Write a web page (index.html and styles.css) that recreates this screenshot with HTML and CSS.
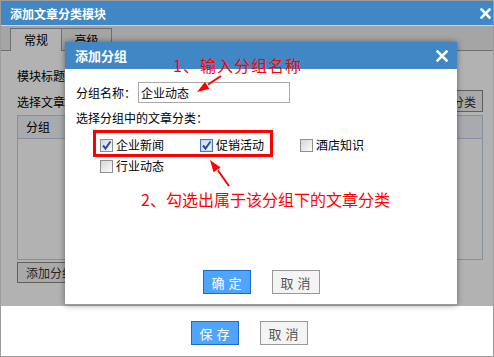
FILE: index.html
```html
<!DOCTYPE html>
<html lang="zh-CN">
<head>
    <meta charset="UTF-8">
    <title>添加文章分类模块</title>
    <link rel="stylesheet" href="styles.css">
</head>
<body>
    <div class="win">
        <div class="win-title">
            <span>添加文章分类模块</span>
            <svg class="x-icon" width="11" height="11" viewBox="0 0 11 11"><path d="M1.5 1.5 L9.5 9.5 M9.5 1.5 L1.5 9.5" stroke="#fff" stroke-width="2.6" stroke-linecap="square"/></svg>
        </div>
        <div class="win-body">
            <div class="tabs">
                <span class="tab active">常规</span>
                <span class="tab">高级</span>
            </div>
            <div class="panel">
                <div class="row"><span>模块标题</span><input class="txt" value=""></div>
                <div class="row between"><span>选择文章</span><button class="btn-sm">添加分类</button></div>
                <div class="grid">
                    <div class="grid-head"><span class="col1">分组</span></div>
                </div>
                <button class="btn-sm add">添加分组</button>
            </div>
            <div class="mask"></div>

            <div class="dlg">
                <div class="dlg-title">
                    <span>添加分组</span>
                    <svg class="x-icon" width="12" height="12" viewBox="0 0 12 12"><path d="M1.5 1.5 L10.5 10.5 M10.5 1.5 L1.5 10.5" stroke="#fff" stroke-width="2.6" stroke-linecap="square"/></svg>
                </div>
                <div class="dlg-body">
                    <div class="field"><span>分组名称：</span><input class="name" value="企业动态"></div>
                    <p class="hint">选择分组中的文章分类：</p>
                    <div class="cats">
                        <label class="cat"><span class="cb checked"><svg width="11" height="11" viewBox="0 0 11 11"><path d="M2 5.5 L4.5 8.5 L9.5 1.5" fill="none" stroke="#2b4aa6" stroke-width="2"/></svg></span>企业新闻</label>
                        <label class="cat"><span class="cb checked focus"><svg width="11" height="11" viewBox="0 0 11 11"><path d="M2 5.5 L4.5 8.5 L9.5 1.5" fill="none" stroke="#2b4aa6" stroke-width="2"/></svg></span>促销活动</label>
                        <label class="cat"><span class="cb"></span>酒店知识</label>
                        <label class="cat"><span class="cb"></span>行业动态</label>
                    </div>
                </div>
                <div class="dlg-foot">
                    <button class="btn primary">确定</button>
                    <button class="btn">取消</button>
                </div>

                <!-- annotations -->
                <div class="mark-box"></div>
                <span class="note note1">1、输入分组名称</span>
                <span class="note note2">2、勾选出属于该分组下的文章分类</span>
                <svg class="arrows" width="392" height="263" viewBox="0 0 392 263">
                    <path d="M156 34 L143 42.5" stroke="#f00" stroke-width="2"/>
                    <polygon points="132,50 144.4,46.8 140,40" fill="#f00"/>
                    <path d="M164 144 L153 128.5" stroke="#f00" stroke-width="2"/>
                    <polygon points="145,118 155.5,125.4 148.6,130.2" fill="#f00"/>
                </svg>
            </div>
        </div>
        <div class="win-foot">
            <button class="btn primary">保存</button>
            <button class="btn">取消</button>
        </div>
    </div>
</body>
</html>
```

FILE: styles.css
```css
body {
    margin: 0;
    font-family: "Noto Sans CJK SC", "Liberation Sans", sans-serif;
    font-size: 12px;
    color: #000;
}
.win {
    width: 494px;
    height: 357px;
    box-sizing: border-box;
    border: 1px solid #9c9c9c;
    display: flex;
    flex-direction: column;
    background: #fff;
}
.win-title {
    height: 24px;
    background-color: #4187c6;
    border-bottom: 1px solid #d6d6d6;
    color: #fff;
    font-weight: bold;
    font-size: 12px;
    display: flex;
    align-items: center;
    justify-content: space-between;
    padding: 0 2px 0 9px;
}
.win-body {
    height: 280px;
    position: relative;
    overflow: visible;
}
.tabs {
    height: 23px;
    background-color: #ececec;
    border-bottom: 1px solid #a0a0a0;
    padding: 1px 0 0 9px;
    display: flex;
    align-items: flex-end;
}
.tab {
    width: 52px;
    height: 22px;
    box-sizing: border-box;
    border: 1px solid #a0a0a0;
    border-bottom: none;
    text-align: center;
    line-height: 22px;
    font-size: 12px;
    background-color: #ececec;
}
.tab + .tab {
    width: 50px;
    border-left: none;
}
.tab.active {
    background-color: #fff;
    height: 23px;
    margin-bottom: -1px;
}
.panel {
    padding: 13px 10px 0 16px;
}
.row {
    height: 22px;
    display: flex;
    align-items: center;
    gap: 2px;
}
.row + .row {
    margin-top: 4px;
}
.row.between {
    justify-content: space-between;
}
.txt {
    width: 200px;
    height: 20px;
    border: 1px solid #a9a9a9;
}
.btn-sm {
    height: 22px;
    padding: 0 6px;
    border: 1px solid #888;
    background-color: #f3f3f3;
    font-family: inherit;
    font-size: 12px;
    color: #333;
}
.grid {
    margin-top: 3px;
    height: 145px;
    box-sizing: border-box;
    border: 1px solid #c2cfe6;
}
.grid-head {
    height: 22px;
    background-color: #f1f4f9;
    border-bottom: 1px solid #c2cfe6;
    display: flex;
    align-items: center;
}
.grid-head .col1 {
    width: 45px;
    padding-left: 8px;
    border-right: 1px solid #c2cfe6;
    line-height: 22px;
}
.btn-sm.add {
    margin-top: 2px;
    height: 21px;
    padding: 0 8px;
}
.mask {
    position: absolute;
    left: 0;
    top: 0;
    right: 0;
    bottom: 0;
    background-color: rgba(0, 0, 0, 0.3);
}
.dlg {
    position: absolute;
    left: 64px;
    top: 16px;
    width: 392px;
    height: 263px;
    box-sizing: border-box;
    background-color: #fff;
    border-bottom: 1px solid #9a9a9a;
    box-shadow: 0 0 6px rgba(0, 0, 0, 0.45);
    display: flex;
    flex-direction: column;
}
.dlg-title {
    height: 27px;
    flex-shrink: 0;
    background-color: #4187c6;
    color: #fff;
    font-weight: bold;
    font-size: 13px;
    display: flex;
    align-items: center;
    justify-content: space-between;
    padding: 0 9px 0 10px;
}
.dlg-body {
    flex: 1;
    padding: 13px 0 0 11px;
}
.field {
    display: flex;
    align-items: center;
    height: 21px;
}
.name {
    margin-left: 2px;
    width: 152px;
    height: 21px;
    box-sizing: border-box;
    border: 1px solid #a9a9a9;
    padding: 0 2px;
    font-family: inherit;
    font-size: 12px;
    color: #000;
}
.hint {
    margin: 8px 0 0;
    line-height: 14px;
}
.cats {
    margin-top: 13px;
    padding-left: 24px;
    display: grid;
    grid-template-columns: repeat(3, 100px);
    row-gap: 7px;
}
.cat {
    display: flex;
    align-items: center;
    height: 14px;
    line-height: 14px;
}
.cb {
    width: 13px;
    height: 13px;
    box-sizing: border-box;
    border: 1px solid #8e8f8f;
    background: linear-gradient(135deg, #d6d6d6, #fbfbfb);
    margin-right: 3px;
    display: flex;
    align-items: center;
    justify-content: center;
}
.cb.focus {
    border-color: #3d7bbf;
    box-shadow: inset 0 0 0 1px #bcdcf4;
}
.dlg-foot {
    display: flex;
    justify-content: center;
    gap: 21px;
    padding-bottom: 10px;
}
.btn {
    width: 48px;
    height: 24px;
    box-sizing: border-box;
    border: 1px solid #999;
    background-color: #f4f4f4;
    color: #555;
    font-family: inherit;
    font-size: 13px;
    letter-spacing: 4px;
    padding: 0 0 0 4px;
}
.btn.primary {
    background-color: #4ea5fb;
    border-color: #1c6cc3;
    color: #fff;
}
.mark-box {
    position: absolute;
    left: 28px;
    top: 88px;
    width: 180px;
    height: 27px;
    box-sizing: border-box;
    border: 3px solid #f00;
}
.note {
    position: absolute;
    color: #f00;
    font-size: 16px;
    line-height: 18px;
    white-space: nowrap;
}
.note1 {
    left: 108px;
    top: 14px;
    letter-spacing: 1px;
}
.note2 {
    left: 76px;
    top: 148px;
}
.arrows {
    position: absolute;
    left: 0;
    top: 0;
    pointer-events: none;
}
.win-foot {
    height: 50px;
    box-sizing: border-box;
    padding: 15px 0 0 4px;
    display: flex;
    justify-content: center;
    align-items: flex-start;
    gap: 21px;
}
```
